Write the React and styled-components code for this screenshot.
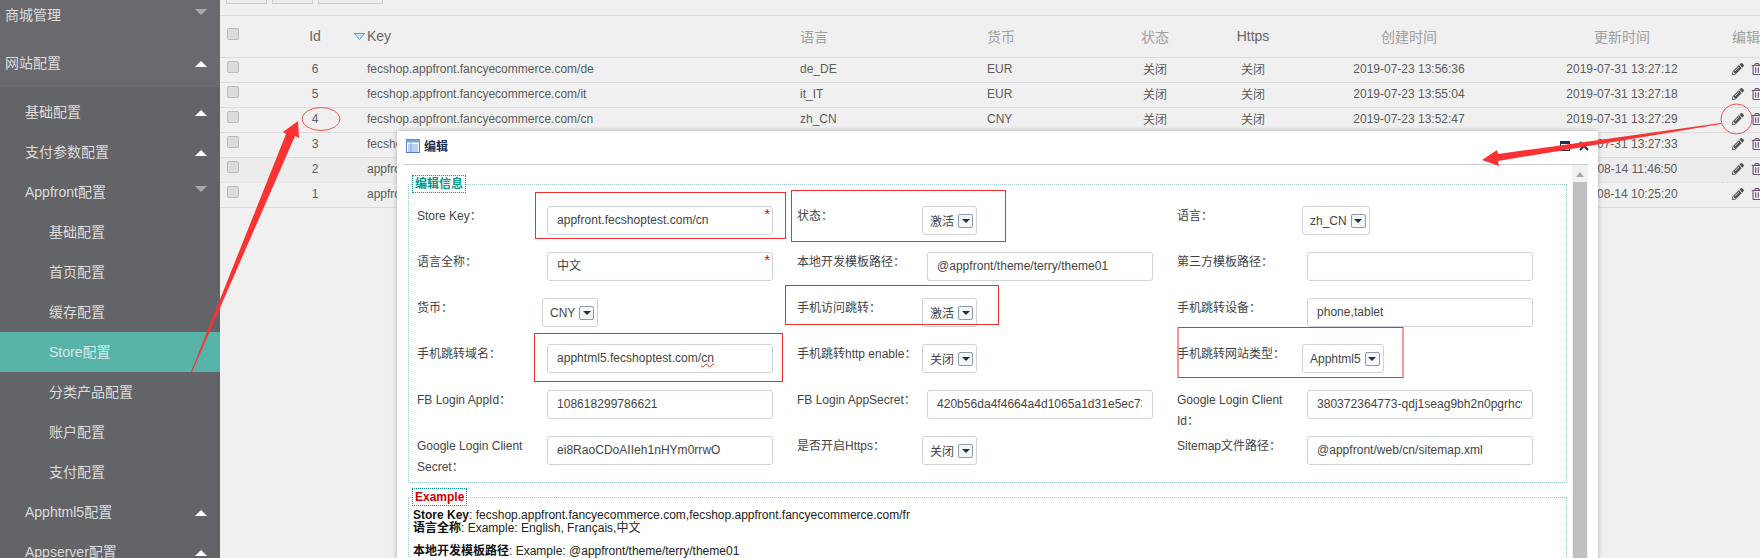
import React from 'react';
import styled, { createGlobalStyle } from 'styled-components';
import { FaPencilAlt, FaRegTrashAlt } from 'react-icons/fa';

const FONT = '"Liberation Sans", "Noto Sans CJK SC", sans-serif';

const GlobalStyle = createGlobalStyle`
    html, body {
        margin: 0;
        padding: 0;
        background: #f0f0f0;
        font-family: ${FONT};
    }
    * {
        box-sizing: border-box;
    }
`;

const Page = styled.div`
    position: relative;
    display: flex;
    width: 1760px;
    height: 558px;
    overflow: hidden;
    background: #f0f0f0;
`;

/* side menu */
const Sidebar = styled.nav`
    flex: 0 0 220px;
    margin-top: -9px;
    background: #636468;
`;

const TopBand = styled.div`
    background: #69696e;
`;

const SubMenu = styled.div`
    padding-top: 5px;
`;

const MenuRow = styled.div`
    display: flex;
    align-items: center;
    justify-content: space-between;
    height: ${p => (p.$level === 0 ? 48 : 40)}px;
    padding: 0 13px 2px ${p => [5, 25, 49][p.$level]}px;
    font-size: 14px;
    color: ${p => (p.$active ? '#d5ebe7' : '#dcdcdc')};
    background: ${p => (p.$active ? '#57b2a8' : 'transparent')};
`;

const Caret = styled.span`
    width: 0;
    height: 0;
    border-left: 6px solid transparent;
    border-right: 6px solid transparent;
    border-bottom: ${p => (p.$open ? '6px solid #fff' : 'none')};
    border-top: ${p => (p.$open ? 'none' : '6px solid #a9a9ac')};
    margin-top: ${p => (p.$open ? '4px' : '-4px')};
`;

/* grid */
const Main = styled.main`
    flex: 1;
    min-width: 0;
`;

const Toolbar = styled.div`
    display: flex;
    gap: 5px;
    height: 16px;
    padding-left: 6px;
    border-bottom: 1px solid #dcdcdc;
`;

const ToolButton = styled.div`
    width: ${p => p.$w}px;
    height: 4px;
    border: 1px solid #cfcfcf;
    border-top: none;
    background: #ececec;
`;

const Table = styled.table`
    width: 1540px;
    table-layout: fixed;
    border-collapse: collapse;
`;

const Th = styled.th`
    height: 41px;
    padding: 0 0 0 ${p => p.$pad || 0}px;
    font-size: 14px;
    font-weight: normal;
    text-align: ${p => p.$align || 'left'};
    color: ${p => p.$color || '#a0a0a0'};
    border-bottom: 1px solid #dcdcdc;
    white-space: nowrap;
`;

const Tr = styled.tr`
    background: ${p => (p.$shade ? '#ececec' : 'transparent')};
`;

const Td = styled.td`
    height: 25px;
    padding: 0 0 ${p => p.$lift || 1}px ${p => p.$pad || 0}px;
    font-size: 12px;
    color: #5c5c5c;
    text-align: ${p => p.$align || 'left'};
    border-bottom: 1px ${p => (p.$dotted ? 'dotted' : 'solid')} #dcdcdc;
    white-space: nowrap;
`;

const Check = styled.span`
    display: block;
    width: 12px;
    height: 12px;
    margin: -5px 0 0 7px;
    background: #dcdcdc;
    border: 1px solid #bcbcbc;
    border-radius: 2px;
`;

const Actions = styled.span`
    display: flex;
    gap: 7px;
    align-items: center;
    font-size: 12px;
    color: #555;
    & svg {
        flex: none;
    }
`;

const TrashTint = styled.span`
    display: flex;
    flex: none;
    color: #6a4f78;
`;

const SortIcon = styled.svg`
    width: 11px;
    height: 7px;
    margin: 0 2px 1px -13px;
`;

/* dialog on top of the grid */
const Dialog = styled.section`
    position: absolute;
    left: 397px;
    top: 131px;
    width: 1201px;
    height: 440px;
    padding: 0 9px 0 6px;
    background: #fff;
    box-shadow: 0 0 5px rgba(0, 0, 0, 0.28);
`;

const DialogHead = styled.header`
    display: flex;
    align-items: center;
    gap: 4px;
    height: 34px;
    padding: 0 0 4px 3px;
    border-bottom: 1px solid #ccc;
    font-size: 12px;
    font-weight: bold;
    color: #1c2f4e;
`;

const HeadTools = styled.span`
    display: flex;
    gap: 9px;
    margin-left: auto;
`;

const DialogBody = styled.div`
    display: flex;
    justify-content: space-between;
    padding-left: 5px;
`;

const Content = styled.div`
    width: 1159px;
    padding-top: 10px;
`;

const ScrollBar = styled.div`
    position: relative;
    width: 16px;
    margin-right: 1px;
    height: 400px;
    background: #f1f1f1;
    &::before {
        content: '';
        position: absolute;
        left: 4px;
        top: 7px;
        border-left: 4px solid transparent;
        border-right: 4px solid transparent;
        border-bottom: 5px solid #a8a8a8;
    }
    &::after {
        content: '';
        position: absolute;
        left: 1px;
        right: 1px;
        top: 17px;
        bottom: 0;
        background: #c0c0c0;
    }
`;

const Fieldset = styled.fieldset`
    margin: 0 0 5px;
    padding: ${p => p.$pad};
    min-width: 0;
    border: 1px dotted #9cc8cc;
`;

const Legend = styled.legend`
    height: 18px;
    margin-left: 3px;
    padding: 0 2px;
    line-height: 16px;
    font-size: 12px;
    font-weight: bold;
    color: ${p => (p.$red ? '#cc0000' : '#009688')};
    border: 1px dotted #009688;
`;

const FormGrid = styled.div`
    display: grid;
    grid-template-columns: repeat(3, 380px);
    grid-auto-rows: 46px;
    padding-left: 8px;
`;

const Cell = styled.div`
    display: flex;
    align-items: flex-start;
`;

const Label = styled.label`
    flex: 0 0 ${p => (p.$select ? 125 : 130)}px;
    padding-right: ${p => (p.$select ? 0 : 4)}px;
    line-height: 21px;
    font-size: 12px;
    color: #444;
`;

const Field = styled.div`
    position: relative;
    width: 226px;
    height: 29px;
    padding: 0 10px 0 9px;
    line-height: 27px;
    font-size: 12px;
    letter-spacing: 0.03px;
    color: #444;
    background: #fff;
    border: 1px solid #cdd3dc;
    border-radius: 3px;
`;

const FieldText = styled.span`
    display: block;
    overflow: hidden;
    white-space: nowrap;
`;

const Required = styled.span`
    position: absolute;
    top: 0;
    right: 2px;
    line-height: 14px;
    font-size: 14px;
    color: #d0021b;
`;

const Typo = styled.span`
    text-decoration: underline wavy #e02020 1px;
`;

const Select = styled.div`
    display: inline-flex;
    align-items: center;
    gap: 4px;
    height: 29px;
    padding: 0 3px 0 7px;
    font-size: 12px;
    color: #444;
    background: #fff;
    border: 1px solid #cdd3dc;
    border-radius: 3px;
`;

const SelectArrow = styled.span`
    display: flex;
    align-items: center;
    justify-content: center;
    width: 15px;
    height: 14px;
    background: #f4f6f8;
    border: 1px solid #8a9bae;
    border-radius: 2px;
    &::after {
        content: '';
        border-left: 4px solid transparent;
        border-right: 4px solid transparent;
        border-top: 4px solid #1c2f4e;
    }
`;

const Notes = styled.div`
    padding-left: 4px;
    font-size: 12px;
    line-height: 13px;
    color: #222;
    white-space: nowrap;
`;

const Note = styled.p`
    margin: 0 0 ${p => p.$gap || 0}px;
    & b {
        color: #111;
    }
`;

const Annotations = styled.svg`
    position: absolute;
    inset: 0;
    width: 1760px;
    height: 558px;
    pointer-events: none;
`;

const rows = [
    [6, 'fecshop.appfront.fancyecommerce.com/de', 'de_DE', 'EUR', '2019-07-23 13:56:36', '2019-07-31 13:27:12'],
    [5, 'fecshop.appfront.fancyecommerce.com/it', 'it_IT', 'EUR', '2019-07-23 13:55:04', '2019-07-31 13:27:18'],
    [4, 'fecshop.appfront.fancyecommerce.com/cn', 'zh_CN', 'CNY', '2019-07-23 13:52:47', '2019-07-31 13:27:29'],
    [3, 'fecshop.appfront.fancyecommerce.com/fr', 'fr_FR', 'EUR', '2019-07-23 13:50:11', '2019-07-31 13:27:33'],
    [2, 'appfront.fecshoptest.com/es', 'es_ES', 'EUR', '2019-07-23 13:48:02', '2019-08-14 11:46:50'],
    [1, 'appfront.fecshoptest.com/en', 'en_US', 'USD', '2019-07-23 13:45:30', '2019-08-14 10:25:20'],
];

const fields = [
    { label: 'Store Key：', value: 'appfront.fecshoptest.com/cn', required: true },
    { label: '状态：', select: '激活' },
    { label: '语言：', select: 'zh_CN' },
    { label: '语言全称：', value: '中文', required: true },
    { label: '本地开发模板路径：', value: '@appfront/theme/terry/theme01' },
    { label: '第三方模板路径：', value: '' },
    { label: '货币：', select: 'CNY' },
    { label: '手机访问跳转：', select: '激活' },
    { label: '手机跳转设备：', value: 'phone,tablet' },
    { label: '手机跳转域名：', value: 'apphtml5.fecshoptest.com/', typo: 'cn' },
    { label: '手机跳转http enable：', select: '关闭' },
    { label: '手机跳转网站类型：', select: 'Apphtml5' },
    { label: 'FB Login AppId：', value: '108618299786621' },
    { label: 'FB Login AppSecret：', value: '420b56da4f4664a4d1065a1d31e5ec73a1b2c4' },
    { label: 'Google Login Client Id：', value: '380372364773-qdj1seag9bh2n0pgrhcvabc' },
    { label: 'Google Login Client Secret：', value: 'ei8RaoCDoAIIeh1nHYm0rrwO' },
    { label: '是否开启Https：', select: '关闭' },
    { label: 'Sitemap文件路径：', value: '@appfront/web/cn/sitemap.xml' },
];

const redBoxes = [
    [535, 192, 250, 46],
    [791, 190, 214, 51],
    [785, 285, 213, 39],
    [534, 333, 248, 48],
    [1177.5, 327, 225, 50],
];

const TableIcon = () => (
    <svg width="14" height="14" viewBox="0 0 14 14">
        <rect x="0.5" y="0.5" width="13" height="13" fill="#fff" stroke="#4f7fc4" />
        <rect x="0.5" y="0.5" width="13" height="3" fill="#7ba3dc" />
        <path d="M2 6h10M2 8h10M2 10h10M2 12h10M5 4v9" stroke="#7ba3dc" fill="none" />
    </svg>
);

const MinIcon = () => (
    <svg width="10" height="10" viewBox="0 0 10 10">
        <rect x="0.5" y="0.5" width="9" height="9" fill="none" stroke="#1c2f4e" />
        <rect x="0" y="0" width="10" height="3" fill="#1c2f4e" />
    </svg>
);

const CloseIcon = () => (
    <svg width="10" height="10" viewBox="0 0 10 10">
        <path d="M1 1l8 8M9 1l-8 8" stroke="#1c2f4e" strokeWidth="2" fill="none" />
    </svg>
);

function App() {
    return (
        <Page>
            <GlobalStyle />
            <Sidebar>
                <TopBand>
                    <MenuRow $level={0}>商城管理<Caret /></MenuRow>
                    <MenuRow $level={0}>网站配置<Caret $open /></MenuRow>
                </TopBand>
                <SubMenu>
                    <MenuRow $level={1}>基础配置<Caret $open /></MenuRow>
                    <MenuRow $level={1}>支付参数配置<Caret $open /></MenuRow>
                    <MenuRow $level={1}>Appfront配置<Caret /></MenuRow>
                    <MenuRow $level={2}>基础配置</MenuRow>
                    <MenuRow $level={2}>首页配置</MenuRow>
                    <MenuRow $level={2}>缓存配置</MenuRow>
                    <MenuRow $level={2} $active>Store配置</MenuRow>
                    <MenuRow $level={2}>分类产品配置</MenuRow>
                    <MenuRow $level={2}>账户配置</MenuRow>
                    <MenuRow $level={2}>支付配置</MenuRow>
                    <MenuRow $level={1}>Apphtml5配置<Caret $open /></MenuRow>
                    <MenuRow $level={1}>Appserver配置<Caret $open /></MenuRow>
                </SubMenu>
            </Sidebar>

            <Main>
                <Toolbar>
                    <ToolButton $w={41} />
                    <ToolButton $w={41} />
                    <ToolButton $w={65} />
                </Toolbar>
                <Table>
                    <colgroup>
                        <col width="50" />
                        <col width="90" />
                        <col width="433" />
                        <col width="187" />
                        <col width="120" />
                        <col width="110" />
                        <col width="86" />
                        <col width="226" />
                        <col width="200" />
                        <col width="38" />
                    </colgroup>
                    <thead>
                        <tr>
                            <Th><Check /></Th>
                            <Th $align="center" $color="#666">Id</Th>
                            <Th $pad={7} $color="#666">
                                <SortIcon viewBox="0 0 11 7">
                                    <polygon points="0.5,0.5 10.5,0.5 5.5,6.5" fill="#cfeaf5" stroke="#5b9bb8" />
                                </SortIcon>
                                Key
                            </Th>
                            <Th $pad={7}>语言</Th>
                            <Th $pad={7}>货币</Th>
                            <Th $align="center">状态</Th>
                            <Th $align="center" $color="#666">Https</Th>
                            <Th $align="center">创建时间</Th>
                            <Th $align="center">更新时间</Th>
                            <Th $pad={10}>编辑</Th>
                        </tr>
                    </thead>
                    <tbody>
                        {rows.map((row, i) => (
                            <Tr key={row[0]} $shade={i === 4}>
                                <Td $dotted={i === 4}><Check /></Td>
                                <Td $dotted={i === 4} $align="center">{row[0]}</Td>
                                <Td $dotted={i === 4} $pad={7}>{row[1]}</Td>
                                <Td $dotted={i === 4} $pad={7}>{row[2]}</Td>
                                <Td $dotted={i === 4} $pad={7}>{row[3]}</Td>
                                <Td $dotted={i === 4} $lift={3} $align="center">关闭</Td>
                                <Td $dotted={i === 4} $lift={3} $align="center">关闭</Td>
                                <Td $dotted={i === 4} $align="center">{row[4]}</Td>
                                <Td $dotted={i === 4} $align="center">{row[5]}</Td>
                                <Td $dotted={i === 4} $pad={10}>
                                    <Actions>
                                        <FaPencilAlt />
                                        <TrashTint><FaRegTrashAlt /></TrashTint>
                                    </Actions>
                                </Td>
                            </Tr>
                        ))}
                    </tbody>
                </Table>
            </Main>

            <Dialog>
                <DialogHead>
                    <TableIcon />
                    编辑
                    <HeadTools><MinIcon /><CloseIcon /></HeadTools>
                </DialogHead>
                <DialogBody>
                    <Content>
                        <Fieldset $pad="13px 0 0">
                            <Legend>编辑信息</Legend>
                            <FormGrid>
                                {fields.map(f => (
                                    <Cell key={f.label}>
                                        <Label $select={!!f.select}>{f.label}</Label>
                                        {f.select ? (
                                            <Select>{f.select}<SelectArrow /></Select>
                                        ) : (
                                            <Field>
                                                <FieldText>
                                                    {f.value}
                                                    {f.typo && <Typo>{f.typo}</Typo>}
                                                </FieldText>
                                                {f.required && <Required>*</Required>}
                                            </Field>
                                        )}
                                    </Cell>
                                ))}
                            </FormGrid>
                        </Fieldset>
                        <Fieldset $pad="3px 0 0">
                            <Legend $red>Example</Legend>
                            <Notes>
                                <Note><b>Store Key</b>: fecshop.appfront.fancyecommerce.com,fecshop.appfront.fancyecommerce.com/fr</Note>
                                <Note $gap={10}><b>语言全称</b>: Example: English, Français,中文</Note>
                                <Note><b>本地开发模板路径</b>: Example: @appfront/theme/terry/theme01</Note>
                            </Notes>
                        </Fieldset>
                    </Content>
                    <ScrollBar />
                </DialogBody>
            </Dialog>

            <Annotations viewBox="0 0 1760 558">
                {redBoxes.map(([x, y, w, h]) => (
                    <rect key={x} x={x + 0.5} y={y + 0.5} width={w} height={h} fill="none" stroke="#f03030" />
                ))}
                <ellipse cx="321" cy="119" rx="19" ry="11.5" fill="none" stroke="#f05555" />
                <ellipse cx="1736.5" cy="119" rx="15.5" ry="15" fill="none" stroke="#f05555" />
                <polygon points="191,372 286,134 283,132 298,121 299,138 295,136 192,372" fill="#fb3232" />
                <polygon points="1721,123 1498,154 1497,150 1482,160 1499,166 1498,161 1721,124" fill="#fb3232" />
            </Annotations>
        </Page>
    );
}

export default App;
